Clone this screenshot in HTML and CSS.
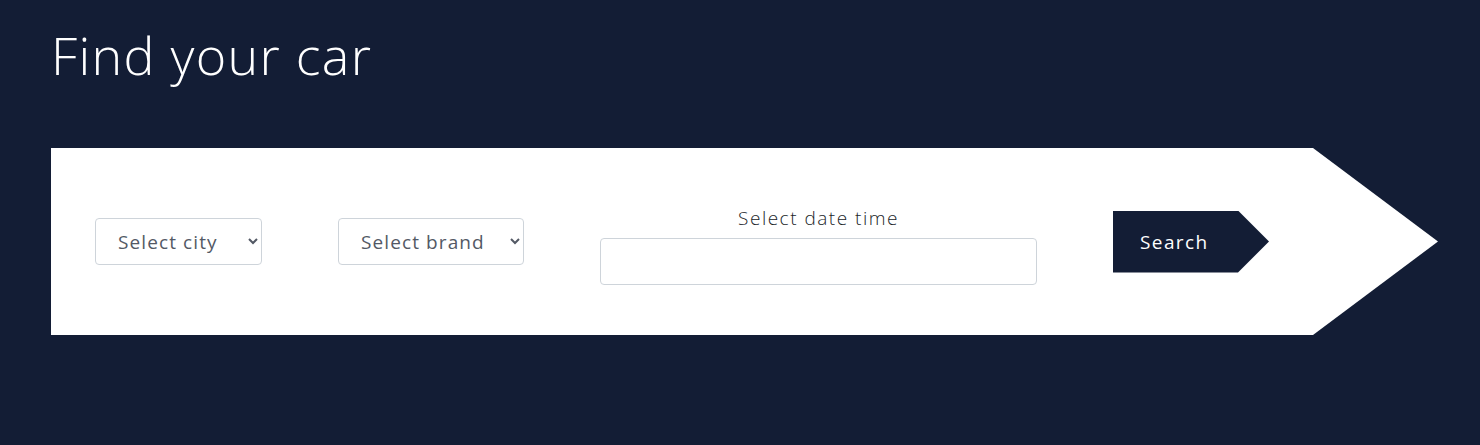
FILE: index.html
```html
<!DOCTYPE html>
<html lang="en">
<head>
<meta charset="utf-8">
<title>Find your car</title>
<link rel="stylesheet" href="styles.css">
</head>
<body>
<main class="page">
  <h1 class="title">Find your car</h1>
  <form class="finder">
    <select class="field select-city">
      <option>Select city</option>
    </select>
    <select class="field select-brand">
      <option>Select brand</option>
    </select>
    <div class="date-col">
      <label class="date-label" for="dt">Select date time</label>
      <input id="dt" class="field date-input" type="text">
    </div>
    <button type="button" class="search-btn">Search</button>
  </form>
</main>
</body>
</html>
```

FILE: styles.css
```css
html, body {
  margin: 0;
  padding: 0;
  background: #131d35;
  height: 100%;
}
body {
  font-family: "Open Sans", "Noto Sans", sans-serif;
  color: #212529;
}
.page {
  padding: 21px 51px 0 51px;
}
.title {
  margin: 0;
  font-weight: 300;
  font-size: 52px;
  line-height: 67px;
  color: #ffffff;
  letter-spacing: 1.3px;
}
.finder {
  margin-top: 60px;
  width: 1387px;
  height: 187px;
  box-sizing: border-box;
  background: #ffffff;
  clip-path: polygon(0 0, 1262px 0, 100% 50%, 1262px 100%, 0 100%);
  display: flex;
  align-items: center;
  gap: 76px;
  padding-left: 44px;
}
.field {
  height: 47px;
  box-sizing: border-box;
  border: 1px solid #ced4da;
  border-radius: 4px;
  background: #fff;
  font-family: inherit;
  font-size: 19px;
  letter-spacing: 1.1px;
  color: #535965;
}
.select-city {
  width: 167px;
  padding: 0 12px 0 18px;
}
.select-brand {
  width: 186px;
  padding: 0 12px 0 18px;
}
.date-col {
  width: 437px;
  display: flex;
  flex-direction: column;
  align-items: stretch;
}
.date-label {
  display: block;
  text-align: center;
  font-size: 19px;
  font-weight: 300;
  letter-spacing: 1.5px;
  line-height: 26px;
  padding-top: 7px;
  margin-bottom: 7px;
  color: #212529;
}
.date-input {
  width: 100%;
  padding: 0 12px;
}
.search-btn {
  width: 156px;
  height: 62px;
  border: 0;
  padding: 0 0 0 27px;
  text-align: left;
  background: #131d35;
  color: #ffffff;
  font-family: inherit;
  font-size: 19px;
  letter-spacing: 1.4px;
  clip-path: polygon(0 0, 125px 0, 100% 50%, 125px 100%, 0 100%);
  cursor: pointer;
}
```
